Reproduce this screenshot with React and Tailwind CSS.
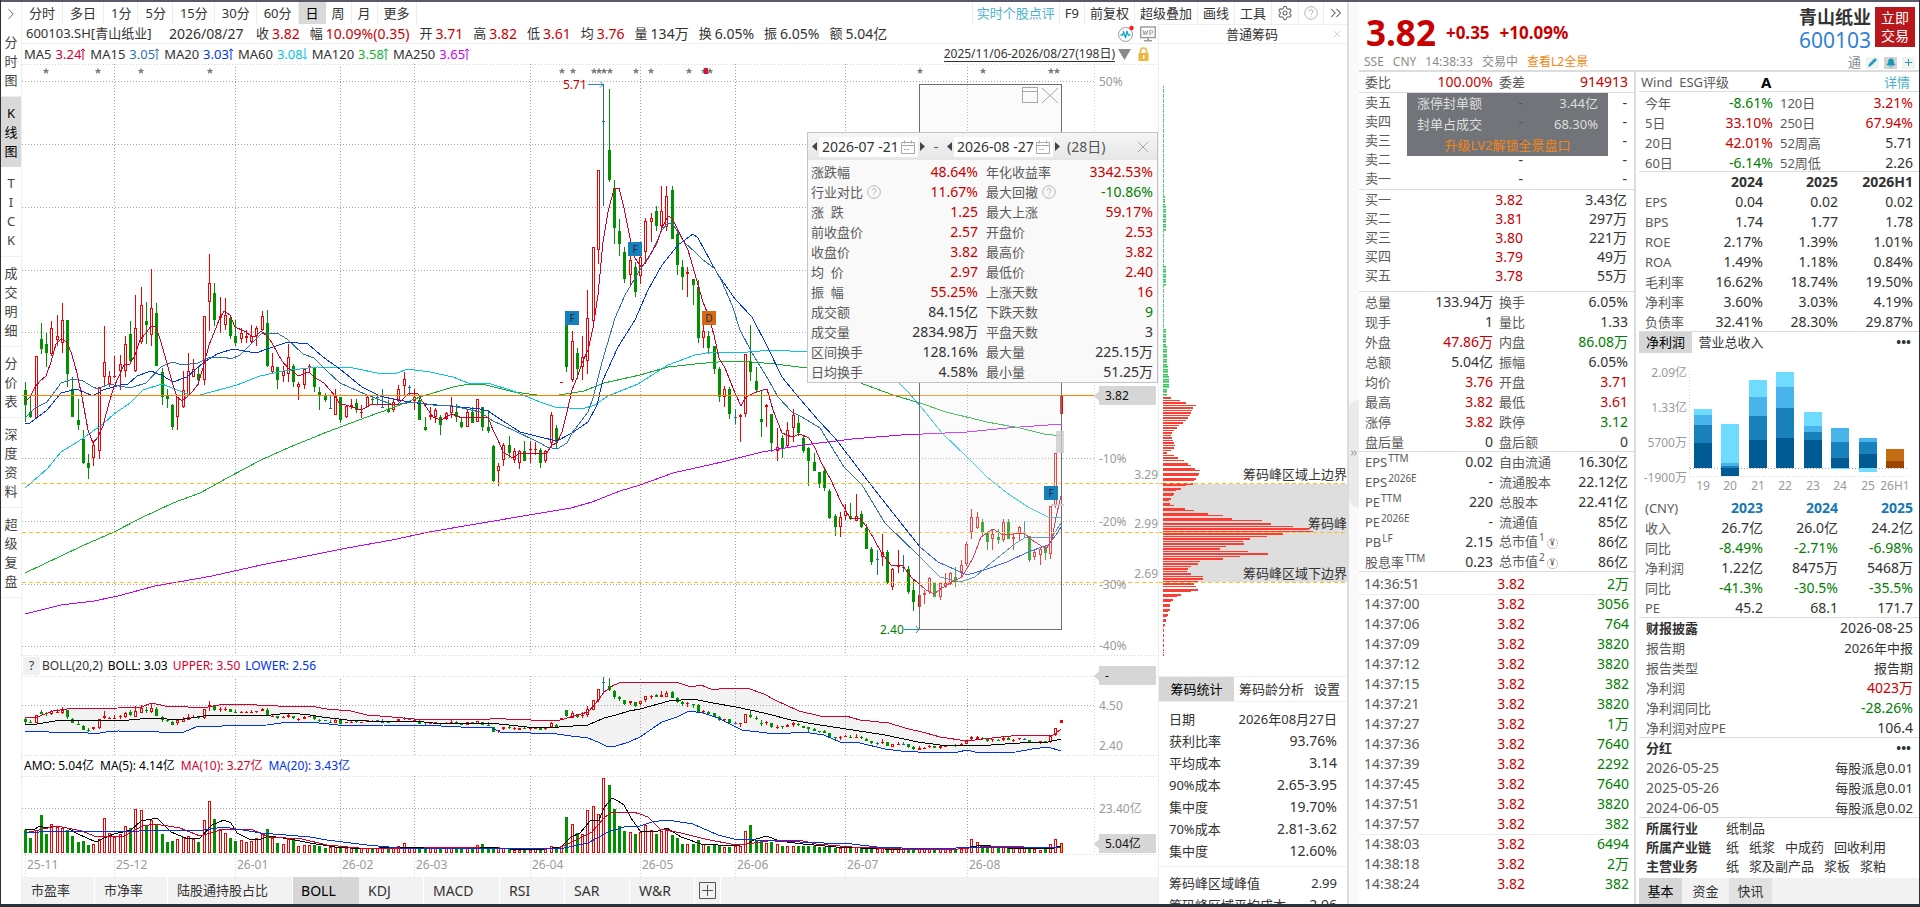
import React from "react";
import { ChevronRight, ChevronsRight, Settings, X, Pencil, Bell, Plus } from "lucide-react";

/* ------------------------------------------------------------------ data */

const FIRST_X = 25;
const STEP = 5.257;
const cx = (i) => Math.round(FIRST_X + i * STEP);

// direction, high, body top, body bottom, low (chart y coordinates)
const CANDLES = `g382,390,405,422 g395,412,417,418 r356,356,418,418 g323,339,349,354 g333,344,353,367 r321,328,354,356
r315,336,340,346 r303,320,343,353 g320,320,374,387 g377,389,417,417 g399,420,425,430 g430,439,463,464
g454,463,468,479 r441,445,458,466 r387,387,451,459 r326,362,377,387 r371,376,384,387 r356,376,377,378
r355,364,371,390 r336,344,371,377 g321,334,361,364 r295,328,371,372 r287,305,342,344 g302,321,325,344
r269,308,335,346 g303,313,366,366 g368,372,397,405 g389,395,399,408 g404,405,427,430 r397,397,417,430
r371,390,407,408 r353,371,395,396 r359,369,377,377 g366,374,380,385 r316,316,380,385 r254,283,302,331
g283,293,320,326 r297,316,318,333 r298,315,325,330 g315,318,336,339 g320,336,343,346 r328,333,339,343
r330,336,338,343 r325,336,342,343 r326,328,336,346 r311,316,330,331 g310,323,366,367 r353,366,372,374
g367,367,380,389 r366,371,376,382 r344,357,374,382 g364,366,382,387 r382,384,387,400 r368,369,385,389
r364,366,368,373 g367,368,387,392 g387,392,396,410 g393,396,400,402 b396,408,408,409 r389,395,415,415
g397,397,420,423 r405,406,417,418 r399,405,407,409 g399,403,410,413 r405,412,413,418 r396,397,407,407
g395,399,400,405 b395,397,397,404 b389,407,407,408 g400,409,412,413 r398,402,410,412 r385,389,400,402
r372,379,386,395 b385,387,387,396 r389,397,401,410 g396,400,420,420 g417,427,430,431 r407,415,417,420
r408,410,417,423 g415,417,425,435 r412,413,419,420 r397,406,413,418 g404,412,417,422 g418,422,427,428
r410,412,427,427 g407,412,423,423 r399,399,422,422 g407,407,427,431 g410,427,431,433 g445,446,481,482
r463,466,471,486 r443,445,460,466 g436,445,453,458 r448,451,460,463 r450,451,463,469 g441,451,461,461
r441,449,450,463 r442,449,450,455 g448,450,463,468 r450,451,461,463 r412,415,443,445 g425,428,442,448
r382,382,383,383 g324,324,367,372 r331,341,380,382 g348,353,369,379 r336,357,367,380 r290,318,361,374
r247,247,321,323 r170,170,250,264 b84,121,121,206 g89,150,180,182 g180,188,228,244 g219,231,244,256
g247,252,279,283 r255,260,275,285 g262,267,292,297 r256,257,276,284 r218,221,252,264 r213,218,222,242
g206,211,226,231 r186,211,226,229 r186,196,227,231 g186,190,239,239 g229,234,265,275 g260,267,277,290
r267,272,274,297 g279,279,285,305 g280,287,338,343 r323,331,338,348 g331,336,348,354 g346,346,369,374
g367,369,397,402 r386,389,397,407 g387,389,414,419 b409,417,417,424 r414,415,417,442 r354,354,414,417
g325,361,372,381 g367,381,390,393 g391,419,422,437 r404,405,407,427 g414,414,443,452 r428,447,451,461
g435,438,448,458 r422,430,446,447 r409,415,428,442 g415,423,433,436 g435,438,451,453 g447,448,461,486
g453,462,471,471 g472,472,484,488 g468,471,488,491 g489,491,518,519 g514,516,527,536 r512,517,527,537
r504,511,516,520 g503,516,519,520 r494,516,521,521 g511,514,527,528 g524,528,549,549 g547,549,562,565
b550,559,559,575 r534,552,557,566 g550,552,583,584 r568,569,587,590 r550,566,567,573 b555,567,567,572
g566,569,592,594 g580,590,602,611 r583,595,607,608 r590,593,595,604 r577,578,592,594 g582,583,597,597
r582,583,597,600 r573,583,587,588 r572,573,584,585 g567,577,583,587 r560,565,572,577 r542,544,564,566
r509,517,532,539 r512,517,528,529 g519,522,533,536 g532,533,542,550 r530,534,539,550 g529,537,540,544
r519,522,540,542 g519,522,539,539 r534,537,539,550 r526,527,533,540 b521,532,532,537 g536,536,560,562
r550,552,557,560 r548,549,555,565 g545,549,553,560 r506,506,554,559 r453,453,505,508 R396,396,414,414`
  .split(/\s+/)
  .map((s) => [s[0], ...s.slice(1).split(",").map(Number)]);

const TURNOVER = [
  23, 15, 23, 38, 19, 29, 26, 25, 23, 17, 11, 12, 8, 9, 14, 35, 20, 16, 19, 27, 25, 44, 43, 28, 33, 28, 19, 11, 12, 14,
  16, 17, 14, 11, 33, 52, 34, 24, 20, 15, 12, 13, 11, 12, 15, 19, 24, 15, 10, 9, 14, 14, 7, 8, 8, 8, 7, 5, 6, 6, 6, 5,
  5, 5, 5, 5, 5, 5, 5, 4, 5, 7, 10, 6, 5, 6, 5, 5, 5, 5, 5, 6, 5, 5, 5, 5, 8, 9, 5, 6, 6, 5, 5, 3, 3, 3, 3, 4, 4, 4, 7,
  5, 7, 36, 29, 20, 19, 43, 47, 39, 75, 68, 44, 27, 22, 21, 19, 21, 28, 23, 19, 22, 24, 18, 15, 9, 9, 9, 13, 9, 7, 8,
  7, 6, 6, 7, 7, 22, 28, 13, 12, 10, 11, 9, 7, 7, 7, 7, 7, 7, 7, 6, 6, 6, 5, 5, 6, 5, 6, 5, 5, 5, 4, 5, 5, 4, 4, 4, 4,
  4, 5, 4, 5, 4, 4, 4, 3, 3, 4, 5, 14, 11, 8, 7, 6, 5, 6, 6, 5, 6, 5, 6, 4, 3, 4, 9, 14, 10,
];

const MA = {
  ma5: "25,402 30,397 35,387 40,381 46,376 51,362 56,344 61,339 67,342 72,355 77,373 82,397 88,430 93,443 98,437 103,426 109,403 114,387 124,365 130,364 135,355 140,340 146,333 151,326 156,327 161,342 167,363 172,382 177,397 182,401 188,396 193,391 198,384 203,368 209,345 214,333 219,320 224,311 230,315 235,327 246,332 251,336 256,336 261,331 267,336 272,343 277,352 282,361 288,368 293,371 298,376 309,372 314,377 324,383 330,390 335,396 340,404 346,405 361,410 372,404 398,404 403,399 409,393 418,394 424,404 433,417 441,420 452,414 462,418 472,417 488,417 493,430 498,440 503,452 513,458 520,453 540,453 546,454 552,445 557,443 562,432 567,412 572,390 577,378 582,363 588,350 593,328 598,295 603,242 608,212 614,189 619,188 624,208 630,238 635,258 641,267 646,262 657,243 662,228 668,216 672,218 678,230 688,250 693,267 698,285 703,302 709,317 714,335 719,358 725,368 735,393 741,406 746,397 756,392 767,389 773,410 782,433 792,437 800,434 809,438 815,448 821,462 831,480 840,500 850,518 860,518 869,530 881,552 891,565 903,566 911,577 926,590 934,594 942,588 952,582 962,577 973,558 981,537 993,529 1003,535 1024,533 1032,540 1046,549 1052,540 1056,517 1061,496",
  ma15: "25,418 35,408 47,402 61,383 73,379 83,381 93,387 98,389 109,384 130,388 146,383 161,367 172,362 183,365 198,363 210,357 224,357 231,359 240,355 251,344 261,334 277,333 287,339 303,354 314,358 327,371 340,383 367,395 383,401 393,405 414,402 433,405 453,406 480,412 493,421 513,430 540,443 547,447 557,449 567,443 572,433 588,412 593,398 602,362 615,318 625,295 640,270 652,252 662,230 668,223 672,223 685,243 695,252 702,259 715,269 722,282 732,305 740,330 752,353 768,379 778,397 792,412 802,417 820,428 844,467 862,485 885,523 920,557 940,577 960,582 975,577 991,563 1016,543 1026,537 1052,537 1061,523",
  ma20: "25,424 30,423 47,410 61,393 77,389 93,396 103,390 120,385 128,384 137,376 151,371 163,376 173,382 187,377 203,363 217,354 233,349 256,353 267,349 288,342 308,344 323,357 340,369 362,387 380,396 397,400 424,404 450,406 480,409 488,411 503,421 520,432 540,437 557,441 572,433 588,422 597,405 603,380 618,347 635,320 648,290 662,265 678,245 693,234 698,238 717,273 735,299 752,317 768,348 782,377 795,393 818,420 835,438 848,455 871,485 893,513 920,547 938,562 967,575 987,569 1007,562 1028,552 1048,545 1056,535 1061,527",
  ma60: "25,488 47,469 61,452 82,439 103,424 114,414 130,403 143,390 162,384 190,395 200,395 237,385 260,376 283,371 317,367 353,368 382,374 397,373 408,369 430,372 453,377 468,383 488,383 513,391 540,402 555,407 582,409 595,405 608,396 638,384 668,365 695,355 712,352 748,352 772,350 807,352 850,358 898,382 909,393 926,413 942,433 967,457 987,477 1007,493 1028,507 1048,517 1061,518",
  ma120: "25,573 82,546 114,532 141,518 173,503 200,493 229,477 261,460 290,447 327,432 367,417 392,408 420,397 453,387 469,384 486,385 514,392 537,395 559,395 584,391 604,383 640,375 668,367 695,364 718,362 735,361 752,362 775,364 807,368 858,382 893,395 920,403 946,412 987,422 1020,428 1044,434 1061,436",
  ma250: "25,614 61,605 94,601 118,596 155,586 178,582 212,576 261,565 302,557 347,548 392,540 429,532 482,523 535,514 571,508 592,502 620,491 640,485 673,473 722,462 762,452 803,445 852,439 901,435 967,432 1007,428 1048,425 1061,424",
};

const BOLL = {
  upper: "25,718 37,717 53,711 67,709 118,708 131,707 141,707 152,703 165,706 188,707 198,708 208,707 224,704 243,704 257,705 278,706 310,706 327,709 351,711 367,715 392,717 414,719 490,719 498,718 506,719 531,720 557,721 567,718 588,712 596,703 604,692 614,685 622,682 656,682 679,683 691,687 701,685 713,690 726,688 747,688 764,694 775,700 799,711 820,716 846,716 860,720 889,723 905,728 926,733 940,737 967,741 983,739 1020,735 1052,736 1061,729",
  mid: "25,725 37,724 61,720 73,720 84,721 106,720 129,720 151,718 167,719 184,719 204,716 224,715 245,715 261,716 290,713 310,715 322,717 347,720 367,721 414,721 433,723 490,723 527,727 559,727 588,725 604,718 616,715 629,711 640,709 669,701 693,699 713,703 736,707 764,713 791,720 820,725 846,729 885,735 918,742 940,745 967,746 991,745 1020,743 1048,742 1061,739",
  lower: "25,732 41,731 49,732 82,732 94,734 106,732 118,731 159,732 184,732 196,727 222,726 267,725 288,722 310,722 347,726 384,725 420,725 461,727 490,727 500,732 531,733 557,734 571,736 588,738 600,743 608,747 616,746 629,742 640,737 662,722 677,717 689,711 703,713 718,718 742,730 767,733 791,733 803,732 824,735 840,742 860,743 885,749 901,751 934,753 958,752 967,750 979,753 1016,752 1032,749 1048,747 1061,751",
};

const AMO = {
  ma5: "25,829 35,829 40,826 46,828 57,826 67,828 78,834 96,842 104,838 114,834 131,830 141,821 157,818 171,832 188,839 200,838 212,825 224,820 231,823 237,833 251,840 261,839 269,836 290,839 310,843 335,847 367,849 392,847 437,847 461,849 486,847 510,849 535,850 561,847 571,837 580,833 590,821 599,820 604,808 612,798 618,801 624,805 631,818 640,831 658,831 667,828 681,837 701,844 734,846 747,844 756,839 767,836 779,841 803,844 836,847 885,849 958,849 983,845 1007,848 1044,849 1054,848 1061,846",
  ma10: "25,833 57,826 82,831 94,836 122,837 143,826 155,824 180,828 200,836 224,829 253,830 269,837 302,839 327,845 359,848 400,849 449,847 510,849 559,848 576,840 592,832 604,818 612,812 633,812 640,814 648,817 660,829 681,833 705,839 736,845 747,844 775,840 799,840 816,844 852,847 901,849 958,849 991,846 1024,847 1061,847",
  ma20: "25,833 53,831 102,831 127,832 151,830 204,830 224,827 261,833 310,837 327,840 367,845 400,848 449,848 559,849 588,843 608,832 624,827 640,826 652,822 667,820 693,824 718,835 734,839 775,841 824,843 852,844 877,847 926,849 987,847 1061,847",
};

const CHIPS = [
  8, 17, 23, 33, 30, 29, 28, 27, 25, 23, 20, 16, 14, 11, 9, 8, 9, 10, 11, 12, 11, 8, 4, 11, 15, 21, 25, 28, 32, 37, 36,
  35, 33, 31, 30, 23, 18, 13, 11, 10, 8, 6, 7, 11, 22, 31, 45, 60, 69, 99, 108, 130, 146, 150, 120, 104, 87, 80, 81, 63,
  57, 85, 105, 77, 60, 37, 35, 28, 25, 24, 28, 40, 40, 35, 31, 33, 35, 28, 18, 14, 10, 8, 7, 7, 7, 5, 5, 4, 3, 3, 2, 1,
  1, 1, 1, 1, 1, 1, 1, 1, 1, 1, 1,
];

const chipAbove = (y) => {
  if (y < 196) return 1;
  if (y < 206) return 2;
  if (y < 230) return 3;
  if (y < 266) return 1;
  if (y < 286) return 3;
  if (y < 328) return 1;
  if (y < 345) return 3;
  if (y < 365) return 4;
  if (y < 376) return 5;
  if (y < 388) return 6;
  return 4;
};

const MONTHS = [
  [25, "25-11"], [114, "25-12"], [235, "26-01"], [340, "26-02"], [414, "26-03"],
  [530, "26-04"], [640, "26-05"], [735, "26-06"], [845, "26-07"], [967, "26-08"],
];

const R = "text-[#c80000]";
const G = "text-[#008000]";
const K = "text-[#333333]";
const UP = "#f00000";
const DOWN = "#009000";
const FLAT = "#1c6f9c";

/* --------------------------------------------------------------- drawing */

function Grid({ top, bottom, rows }) {
  return (
    <g shapeRendering="crispEdges">
      {MONTHS.slice(1).map(([x]) => (
        <line key={x} x1={x + 0.5} x2={x + 0.5} y1={top} y2={bottom} stroke="#a4a4a4" strokeDasharray="1 2" />
      ))}
      {rows.map((y) => (
        <line key={y} x1={22} x2={1094} y1={y + 0.5} y2={y + 0.5} stroke="#a4a4a4" strokeDasharray="1 2" />
      ))}
      <line x1={1094.5} x2={1094.5} y1={top} y2={bottom} stroke="#d4d4d4" strokeDasharray="1 2" />
      <line x1={22} x2={1158} y1={top + 0.5} y2={top + 0.5} stroke="#d4d4d4" strokeDasharray="1 2" />
    </g>
  );
}

function Candle({ x, c }) {
  const [d, hi, t, b, lo] = c;
  const h = Math.max(b - t, 1);
  if (d === "b")
    return (
      <g fill={FLAT}>
        <rect x={x} y={hi} width={1} height={lo - hi} />
        <rect x={x - 1} y={t} width={3} height={1} />
      </g>
    );
  if (d === "g")
    return (
      <g fill={DOWN}>
        <rect x={x} y={hi} width={1} height={Math.max(lo - hi, 1)} />
        <rect x={x - 1} y={t} width={3} height={h} />
      </g>
    );
  if (d === "R") return <rect x={x - 1} y={t} width={3} height={h} fill={UP} />;
  return (
    <g fill={UP}>
      <rect x={x} y={hi} width={1} height={Math.max(t - hi, 0)} />
      <rect x={x} y={b} width={1} height={Math.max(lo - b, 0)} />
      <rect x={x - 1} y={t} width={3} height={h} />
      {h > 2 && <rect x={x} y={t + 1} width={1} height={h - 2} fill="#ffffff" />}
    </g>
  );
}

const Line = ({ points, color }) => (
  <polyline points={points} fill="none" stroke={color} strokeWidth={1} shapeRendering="crispEdges" />
);

function Tag({ y, text }) {
  return (
    <g>
      <path d={`M1094 ${y + 10} l5 -5 v10 z M1099 ${y} h57 v19 h-57 z`} fill="#d6d6d6" />
      <text x={1105} y={y + 14} fontSize={12} fill="#111111">{text}</text>
    </g>
  );
}

function Flag({ x, y, text, color }) {
  return (
    <g>
      <rect x={x} y={y} width={14} height={14} fill={color} />
      <text x={x + 7} y={y + 11} fontSize={10} textAnchor="middle" fill="#22303c">{text}</text>
    </g>
  );
}

const Star = ({ x, color = "#7c7c7c" }) => (
  <path
    transform={`translate(${x} 71)`}
    d="M0 -3.4 L0.9 -1 L3.4 -1 L1.4 0.5 L2.2 3 L0 1.5 L-2.2 3 L-1.4 0.5 L-3.4 -1 L-0.9 -1 Z"
    fill={color}
  />
);

const svgClass = "block w-full shrink-0 overflow-visible";

function MainChart() {
  return (
    <svg className={`${svgClass} h-[591px]`} viewBox="22 64 1136 591" preserveAspectRatio="none" role="img" aria-label="K线图">
      <Grid top={64} bottom={655} rows={[81, 144, 207, 270, 332, 458, 521, 584, 646]} />
      <line x1={22} x2={1158} y1={655.5} y2={655.5} stroke="#d4d4d4" strokeDasharray="1 2" />
      {[46, 98, 141, 210, 562, 573, 594, 599, 604, 610, 636, 651, 689, 704, 710, 920, 983, 1051, 1057].map((x) => (
        <Star key={x} x={x} />
      ))}
      <rect x={704} y={68} width={4} height={6} fill="#d4143c" />
      <g shapeRendering="crispEdges">
        {CANDLES.map((c, i) => <Candle key={i} x={cx(i)} c={c} />)}
      </g>
      <Line points={MA.ma250} color="#c800ff" />
      <Line points={MA.ma120} color="#14b02e" />
      <Line points={MA.ma60} color="#08c4dc" />
      <Line points={MA.ma20} color="#0034e8" />
      <Line points={MA.ma15} color="#2e72ac" />
      <Line points={MA.ma5} color="#d0002c" />
      <g shapeRendering="crispEdges">
        <rect x={22} y={395} width={1072} height={1} fill="#ff8000" />
        {[483, 532, 582].map((y) => (
          <line key={y} x1={22} x2={1158} y1={y + 0.5} y2={y + 0.5} stroke="#ffbe1a" strokeDasharray="4 3" />
        ))}
        <rect x={919.5} y={84.5} width={142} height={545} fill="#f0f0f0" fillOpacity={0.28} stroke="#6e6e6e" />
        <rect x={1056} y={431} width={8} height={22} fill="#cccccc" fillOpacity={0.8} />
        <rect x={1051} y={504} width={13} height={2} fill="#cccccc" fillOpacity={0.9} />
      </g>
      <g fill="none" stroke="#a8a8a8">
        <rect x={1022.5} y={87.5} width={15} height={15} />
        <path d="M1022 91.5 h16" />
        <path d="M1042 88 l16 15 M1058 88 l-16 15" />
      </g>
      <Flag x={565} y={311} text="F" color="#1680bc" />
      <Flag x={628} y={242} text="F" color="#1680bc" />
      <Flag x={702} y={311} text="D" color="#d46a14" />
      <Flag x={1044} y={486} text="F" color="#1680bc" />
      <g fill="none" stroke="#2c8cae">
        <path d="M588 84.5 h15 M600 81.5 l3 3 l-3 3" />
        <path d="M904 629.5 h15 M916 626 l3 3.5 l-3 3.5" />
      </g>
      <text x={563} y={89} fontSize={12} fill="#c80000">5.71</text>
      <text x={880} y={634} fontSize={12} fill="#008000">2.40</text>
      <g fontSize={12} fill="#9a9a9a">
        <text x={1099} y={86}>50%</text>
        <text x={1099} y={463}>-10%</text>
        <text x={1099} y={526}>-20%</text>
        <text x={1099} y={589}>-30%</text>
        <text x={1099} y={650}>-40%</text>
        <text x={1158} y={479} textAnchor="end">3.29</text>
        <text x={1158} y={528} textAnchor="end">2.99</text>
        <text x={1158} y={578} textAnchor="end">2.69</text>
      </g>
      <Tag y={386} text="3.82" />
    </svg>
  );
}

const toBoll = (y) => Math.round(677 + (y - 84) * 0.1387);

function BollChart() {
  const back = BOLL.lower.split(" ").reverse().join(" ");
  return (
    <svg className={`${svgClass} h-[79px]`} viewBox="22 676 1136 79" preserveAspectRatio="none" role="img" aria-label="BOLL">
      <polygon points={`${BOLL.upper} ${back}`} fill="#f3f3f3" />
      <Grid top={676} bottom={755} rows={[705]} />
      <line x1={22} x2={1158} y1={755.5} y2={755.5} stroke="#d4d4d4" strokeDasharray="1 2" />
      <g shapeRendering="crispEdges">
        {CANDLES.map(([d, ...v], i) => <Candle key={i} x={cx(i)} c={[d, ...v.map(toBoll)]} />)}
      </g>
      <Line points={BOLL.upper} color="#d4002c" />
      <Line points={BOLL.mid} color="#000000" />
      <Line points={BOLL.lower} color="#0030f0" />
      <text x={1099} y={710} fontSize={12} fill="#9a9a9a">4.50</text>
      <text x={1099} y={750} fontSize={12} fill="#9a9a9a">2.40</text>
      <Tag y={666} text="-" />
    </svg>
  );
}

function AmoChart() {
  return (
    <svg className={`${svgClass} h-[101px]`} viewBox="22 776 1136 101" preserveAspectRatio="none" role="img" aria-label="成交额">
      <Grid top={776} bottom={853} rows={[808]} />
      <g shapeRendering="crispEdges">
        <line x1={22} x2={1158} y1={854.5} y2={854.5} stroke="#d4d4d4" strokeDasharray="1 2" />
        {CANDLES.map(([d], i) => {
          const h = TURNOVER[i] ?? 5;
          const x = cx(i);
          const y = 853 - h;
          if (d === "g") return <rect key={i} x={x - 1} y={y} width={3} height={h} fill={DOWN} />;
          return (
            <g key={i}>
              <rect x={x - 1} y={y} width={3} height={h} fill={UP} />
              <rect x={x} y={y + 1} width={1} height={Math.max(h - 2, 1)} fill={d === "R" ? "#ffbe1a" : "#ffffff"} />
            </g>
          );
        })}
        {MONTHS.map(([x]) => (
          <line key={x} x1={x + 0.5} x2={x + 0.5} y1={855} y2={877} stroke="#d4d4d4" strokeDasharray="1 2" />
        ))}
      </g>
      <Line points={AMO.ma5} color="#000000" />
      <Line points={AMO.ma10} color="#d4002c" />
      <Line points={AMO.ma20} color="#0030f0" />
      <text x={1099} y={813} fontSize={12} fill="#9a9a9a">23.40亿</text>
      <Tag y={834} text="5.04亿" />
      <g fontSize={12} fill="#9a9a9a">
        {MONTHS.map(([x, label]) => <text key={x} x={x + 2} y={869}>{label}</text>)}
      </g>
    </svg>
  );
}

function ChipChart() {
  const above = [];
  for (let y = 86; y < 396; y += 2.5) above.push(y);
  return (
    <svg className="block h-[632px] w-full shrink-0" viewBox="1159 44 188 632" preserveAspectRatio="none" role="img" aria-label="普通筹码">
      <rect x={1163} y={484} width={184} height={98} fill="#dedede" />
      {above.map((y) => <rect key={y} x={1163} y={Math.round(y)} width={chipAbove(y)} height={1.6} fill="#34c85a" />)}
      <g shapeRendering="crispEdges">
        {CHIPS.map((w, i) => {
          const y = Math.round(397 + i * 2.52);
          return <rect key={i} x={1163} y={y} width={w} height={i % 2 ? 1 : 2} fill="#ff3c32" />;
        })}
        {[483, 532, 582].map((y) => (
          <line key={y} x1={1159} x2={1347} y1={y + 0.5} y2={y + 0.5} stroke="#ffbe1a" strokeDasharray="4 3" />
        ))}
      </g>
      <g fontSize={13} fill="#333333" textAnchor="end">
        <text x={1347} y={479}>筹码峰区域上边界</text>
        <text x={1347} y={528}>筹码峰</text>
        <text x={1347} y={578}>筹码峰区域下边界</text>
      </g>
    </svg>
  );
}

const PROFIT = [
  ["19", [[409, 6, 3], [415, 10, 2], [425, 18, 1], [443, 25, 0]]],
  ["20", [[424, 39, 3], [463, 3, 2], [466, 2, 1], [468, 8, 0]]],
  ["21", [[380, 17, 3], [397, 19, 2], [416, 24, 1], [440, 28, 0]]],
  ["22", [[372, 15, 3], [387, 21, 2], [408, 30, 1], [438, 30, 0]]],
  ["23", [[412, 14, 3], [426, 6, 2], [432, 8, 1], [440, 28, 0]]],
  ["24", [[428, 14, 2], [442, 16, 1], [458, 10, 0], [468, 1, 3]]],
  ["25", [[438, 4, 2], [442, 12, 1], [454, 14, 0], [468, 4, 3]]],
  ["26H1", [[449, 12, 4], [461, 7, 5]]],
];
const SHADES = ["#005a94", "#1880ba", "#49b3ec", "#6fdcff", "#c46c12", "#9c4400"];

function ProfitChart() {
  const xs = [1694, 1721, 1749, 1776, 1804, 1831, 1859, 1886];
  return (
    <svg className="block h-[145px] w-full shrink-0" viewBox="1639 353 280 145" preserveAspectRatio="none" role="img" aria-label="净利润">
      <g shapeRendering="crispEdges">
        <line x1={1689.5} x2={1689.5} y1={371} y2={476} stroke="#d4d4d4" strokeDasharray="1 2" />
        <line x1={1690} x2={1909} y1={476.5} y2={476.5} stroke="#d4d4d4" strokeDasharray="1 2" />
        <line x1={1690} x2={1909} y1={468.5} y2={468.5} stroke="#a0a0a0" strokeDasharray="1 2" />
        {PROFIT.map(([, parts], i) =>
          parts.map(([y, h, s]) => <rect key={`${i}-${y}`} x={xs[i]} y={y} width={18} height={h} fill={SHADES[s]} />)
        )}
      </g>
      <g fontSize={12} fill="#9a9a9a" textAnchor="end">
        <text x={1687} y={377}>2.09亿</text>
        <text x={1687} y={412}>1.33亿</text>
        <text x={1687} y={447}>5700万</text>
        <text x={1687} y={482}>-1900万</text>
      </g>
      <g fontSize={12} fill="#9a9a9a" textAnchor="middle">
        {PROFIT.map(([label], i) => <text key={label} x={xs[i] + 9} y={490}>{label}</text>)}
      </g>
    </svg>
  );
}

/* ------------------------------------------------------------- left side */

const SIDE = ["分时图", "K线图", "TICK", "成交明细", "分价表", "深度资料", "超级复盘"];

function Sidebar() {
  return (
    <nav className="flex w-[21px] shrink-0 flex-col border-r border-[#efefef] text-[13px] text-[#444444]">
      <button className="flex h-[24px] shrink-0 items-center justify-center" aria-label="展开">
        <ChevronRight size={18} strokeWidth={1.3} className="text-[#666666]" />
      </button>
      {SIDE.map((s) => (
        <button
          key={s}
          className={
            s === "K线图"
              ? "flex shrink-0 flex-col items-center bg-[#d9d9d9] pt-[7px] pb-[6px] leading-[19px] text-black"
              : "flex shrink-0 flex-col items-center border-b border-[#efefef] pt-[7px] pb-[6px] leading-[19px]"
          }
        >
          {[...s].map((c, i) => <span key={i} className="h-[19px]">{c}</span>)}
        </button>
      ))}
    </nav>
  );
}

const PERIODS = ["分时", "多日", "1分", "5分", "15分", "30分", "60分", "日", "周", "月", "更多"];

function Toolbar() {
  const cell = "flex items-center border-r border-[#ededed]";
  return (
    <div className="flex h-[22px] shrink-0 items-stretch text-[13px] leading-none text-[#333333]">
      {PERIODS.map((p, i) => (
        <button
          key={p}
          className={p === "日" ? "flex items-center bg-[#d9d9d9] px-[7px] text-black" : `${cell} ${i > 7 ? "px-[6px]" : i > 1 ? "pr-[6px] pl-[7px]" : "px-[7px]"}`}
        >
          {p}
        </button>
      ))}
      <div className="flex-1 border-r border-[#ededed]" />
      <button className={`${cell} px-1 text-[#4ab0cc]`}>实时个股点评</button>
      {["F9", "前复权", "超级叠加", "画线", "工具"].map((p) => (
        <button key={p} className={`${cell} px-[5px]`}>{p}</button>
      ))}
      <button className={`${cell} w-[27px] justify-center text-[#666666]`} aria-label="设置">
        <Settings size={16} strokeWidth={1.6} />
      </button>
      <button className={`${cell} w-[25px] justify-center`} aria-label="帮助">
        <HelpMark />
      </button>
      <button className="flex w-[23px] items-center justify-center text-[#555555]" aria-label="更多工具">
        <ChevronsRight size={18} strokeWidth={1.4} />
      </button>
    </div>
  );
}

function HelpMark() {
  return (
    <svg width="14" height="14" viewBox="0 0 14 14" fill="none" stroke="#b4b4b4">
      <circle cx="7" cy="7" r="6.3" />
      <path d="M5 5.5 a2 2 0 1 1 2.9 1.8 q-0.9 0.5 -0.9 1.4 M7 9.8 v1" />
    </svg>
  );
}

const INFO = [
  ["收", "3.82", R], ["幅", "10.09%(0.35)", R], ["开", "3.71", R], ["高", "3.82", R], ["低", "3.61", R],
  ["均", "3.76", R], ["量", "134万", K], ["换", "6.05%", K], ["振", "6.05%", K], ["额", "5.04亿", K],
];

const MA_ROW = [
  ["MA5", "3.24", "u", "text-[#d0002c]"], ["MA15", "3.05", "u", "text-[#2e72ac]"], ["MA20", "3.03", "u", "text-[#0034e8]"],
  ["MA60", "3.08", "d", "text-[#08c4dc]"], ["MA120", "3.58", "u", "text-[#14b02e]"], ["MA250", "3.65", "u", "text-[#c800ff]"],
];

function InfoRows() {
  return (
    <>
      <div className="flex h-[20px] shrink-0 items-center border-b border-[#efefef] pl-1 text-[13px] leading-none text-[#333333]">
        <span className="w-[143px]">600103.SH[青山纸业]</span>
        <span className="mr-[10px] w-[77px] text-[14px]">2026/08/27</span>
        {INFO.map(([l, v, c]) => (
          <span key={l} className="mr-[10px] flex items-center gap-[3px]">
            {l}
            <span className={`text-[14px] ${c}`}>{v}</span>
          </span>
        ))}
        <span className="ml-auto flex items-center gap-[6px] pr-[2px]">
          <svg width="16" height="18" viewBox="0 0 16 18" fill="none">
            <circle cx="7.5" cy="9.5" r="7" stroke="#9a9a9a" />
            <path d="M2.5 10 h2 l1.2 -3 l1.8 6 l1.5 -7 l1.2 4 h2.3" stroke="#12a8c8" strokeWidth="1.3" />
            <circle cx="13.5" cy="3" r="2.2" fill="#ff1a1a" />
          </svg>
          <svg width="16" height="16" viewBox="0 0 16 16" fill="none" stroke="#9a9a9a">
            <rect x="0.7" y="1" width="14.6" height="10.6" strokeWidth="1.4" />
            <path d="M8 12 v2 M4 14.8 h8" strokeWidth="1.6" />
            <path d="M3 4 l1.2 5 l1.2 -4 l1.2 4 l1.2 -5 M9.8 9.4 v-5 h1.7 q1.4 0 1.4 1.4 t-1.4 1.4 h-1.7" />
          </svg>
        </span>
      </div>
      <div className="flex h-[20px] shrink-0 items-center gap-[5px] pl-[2px] text-[13px] leading-none text-[#333333]">
        {MA_ROW.map(([l, v, d, c]) => (
          <span key={l} className="flex items-center gap-1">
            {l}
            <span className={`flex items-center ${c}`}>
              {v}
              <svg width="4" height="12" viewBox="0 0 4 12" fill="none" stroke="currentColor">
                <path d={d === "u" ? "M2 12 V1 M0 3 L2 0.8 L4 3" : "M2 0 V11 M0 9 L2 11.2 L4 9"} />
              </svg>
            </span>
          </span>
        ))}
        <span className="ml-auto flex items-center gap-[3px] pr-[9px]">
          <button className="border-b border-[#333333] text-[12px] leading-[15px]">2025/11/06-2026/08/27(198日)</button>
          <svg width="13" height="11" viewBox="0 0 13 11"><path d="M0 0 h13 l-6.5 11 z" fill="#8a8a8a" /></svg>
          <svg className="ml-1" width="11" height="14" viewBox="0 0 11 14">
            <path d="M2.5 6 V4 a3 3 0 0 1 6 0 V6" fill="none" stroke="#f2b53c" strokeWidth="1.6" />
            <rect x="0.5" y="6" width="10" height="8" fill="#f2b53c" />
            <rect x="5" y="8" width="1.4" height="4" fill="#ffffff" />
          </svg>
        </span>
      </div>
    </>
  );
}

/* ------------------------------------------------------- interval window */

const INTERVAL = [
  ["涨跌幅", "48.64%", R, "年化收益率", "3342.53%", R],
  ["行业对比", "11.67%", R, "最大回撤", "-10.86%", G],
  ["涨  跌", "1.25", R, "最大上涨", "59.17%", R],
  ["前收盘价", "2.57", R, "开盘价", "2.53", R],
  ["收盘价", "3.82", R, "最高价", "3.82", R],
  ["均  价", "2.97", R, "最低价", "2.40", R],
  ["振  幅", "55.25%", R, "上涨天数", "16", R],
  ["成交额", "84.15亿", K, "下跌天数", "9", G],
  ["成交量", "2834.98万", K, "平盘天数", "3", K],
  ["区间换手", "128.16%", K, "最大量", "225.15万", K],
  ["日均换手", "4.58%", K, "最小量", "51.25万", K],
];

function DateField({ value, label }) {
  return (
    <span className="flex items-center gap-[2px]">
      <button aria-label={`${label}前一日`}><svg width="5" height="9" viewBox="0 0 5 9"><path d="M5 0 v9 l-5 -4.5 z" fill="#444444" /></svg></button>
      <span className="flex h-[20px] items-center bg-white px-[3px]">
        <input aria-label={label} defaultValue={value} className="w-[79px] bg-transparent text-[14px] leading-none text-[#333333] outline-none" />
        <svg width="14" height="14" viewBox="0 0 14 14" fill="none" stroke="#a8a8a8">
          <path d="M0.5 2.5 h13 v11 h-13 z M0.5 5.5 h13 M3.5 0.5 v3 M10.5 0.5 v3" />
          <path d="M3 9.5 h2 M6 9.5 h2" />
        </svg>
      </span>
      <button aria-label={`${label}后一日`}><svg width="5" height="9" viewBox="0 0 5 9"><path d="M0 0 v9 l5 -4.5 z" fill="#444444" /></svg></button>
    </span>
  );
}

function IntervalWindow() {
  return (
    <section className="absolute top-[68px] right-0 w-[351px] border border-[#c4c4c4] bg-[#f9f9f9]">
      <header className="flex h-[27px] items-center bg-linear-to-b from-[#f6f6f6] to-[#e6e6e6] pr-1 pl-1 text-[14px] leading-none text-[#555555]">
        <DateField value="2026-07 -21" label="开始日期" />
        <span className="w-[22px] text-center">-</span>
        <DateField value="2026-08 -27" label="结束日期" />
        <span className="ml-[7px]">(28日)</span>
        <button className="ml-auto text-[#999999]" aria-label="关闭"><X size={20} strokeWidth={1} /></button>
      </header>
      <table className="mt-[2px] w-full table-fixed border-collapse leading-none">
        <colgroup>
          <col className="w-[80px]" /><col className="w-[90px]" /><col className="w-[88px]" /><col />
        </colgroup>
        <tbody>
          {INTERVAL.map(([a, b, bc, c, d, dc], i) => (
            <tr key={a} className="h-[20px]">
              <td className="pl-[3px] text-[13px] whitespace-pre text-[#5a5a5a]">
                <span className="flex items-center gap-1">{a}{i === 1 && <HelpMark />}</span>
              </td>
              <td className={`text-right text-[14px] ${bc}`}>{b}</td>
              <td className="pl-2 text-[13px] whitespace-nowrap text-[#5a5a5a]">
                <span className="flex items-center gap-1">{c}{i === 1 && <HelpMark />}</span>
              </td>
              <td className={`pr-1 text-right text-[14px] ${dc}`}>{d}</td>
            </tr>
          ))}
        </tbody>
      </table>
    </section>
  );
}

const TABS = ["市盈率", "市净率", "陆股通持股占比", "BOLL", "KDJ", "MACD", "RSI", "SAR", "W&R"];

function tabClass(t, i) {
  if (t === "BOLL") return "w-[66px] bg-[#d6d6d6] pl-2 text-left text-[14px] text-black";
  if (t === "MACD") return "w-[76px] border-r border-white pl-[9px] text-left text-[14px]";
  if (i > 3) return "w-[65px] border-r border-white pl-[9px] text-left text-[14px]";
  return "border-r border-white pr-6 pl-[9px]";
}

function ChartColumn() {
  return (
    <main className="flex min-w-0 flex-1 flex-col">
      <InfoRows />
      <div className="relative">
        <MainChart />
        <IntervalWindow />
      </div>
      <div className="flex h-[21px] shrink-0 items-center gap-[5px] pl-px text-[12px] leading-none">
        <button className="h-[18px] w-[17px] bg-[#f0f0f0] text-[#333333]">?</button>
        <span className="-ml-[3px] text-[#333333]">BOLL(20,2)</span>
        <span className="text-black">BOLL: 3.03</span>
        <span className="text-[#d4002c]">UPPER: 3.50</span>
        <span className="text-[#0030f0]">LOWER: 2.56</span>
      </div>
      <BollChart />
      <div className="flex h-[21px] shrink-0 items-center gap-[6px] pl-[2px] text-[12px] leading-none">
        <span className="text-black">AMO: 5.04亿</span>
        <span className="text-black">MA(5): 4.14亿</span>
        <span className="text-[#d4002c]">MA(10): 3.27亿</span>
        <span className="text-[#0030f0]">MA(20): 3.43亿</span>
      </div>
      <AmoChart />
      <div className="flex flex-1 items-stretch bg-[#f2f2f2] text-[13px] leading-none text-[#333333]">
        {TABS.map((t, i) => (
          <button key={t} className={tabClass(t, i)}>{t}</button>
        ))}
        <button className="flex w-[26px] items-center justify-center border-r border-white" aria-label="添加指标">
          <svg width="17" height="17" viewBox="0 0 17 17" fill="none" stroke="#555555">
            <path d="M0.5 0.5 h16 v16 h-16 z M8.5 3 v11 M3 8.5 h11" />
          </svg>
        </button>
      </div>
    </main>
  );
}

/* ------------------------------------------------------------ chip panel */

const STATS = [
  ["日期", "2026年08月27日"], ["获利比率", "93.76%"], ["平均成本", "3.14"], ["90%成本", "2.65-3.95"],
  ["集中度", "19.70%"], ["70%成本", "2.81-3.62"], ["集中度", "12.60%"],
];
const PEAKS = [["筹码峰区域峰值", "2.99"], ["筹码峰区域平均成本", "2.96"]];

function StatTable({ rows }) {
  return (
    <table className="w-full text-[13px] leading-none text-[#333333]">
      <tbody>
        {rows.map(([l, v], i) => (
          <tr key={i} className="h-[22px]">
            <td className="pl-[10px] whitespace-nowrap">{l}</td>
            <td className={`pr-[10px] text-right whitespace-nowrap ${i === 0 ? "" : "text-[14px]"}`}>{v}</td>
          </tr>
        ))}
      </tbody>
    </table>
  );
}

function ChipPanel() {
  return (
    <aside className="flex min-h-0 w-[189px] shrink-0 flex-col overflow-hidden border-l border-[#ededed]">
      <div className="flex h-[20px] shrink-0 items-center border-y border-[#efefef] text-[13px] leading-none text-[#333333]">
        <span className="flex-1 pl-[14px] text-center">普通筹码</span>
        <button className="pr-1 text-[#b4b4b4]" aria-label="关闭"><X size={12} strokeWidth={1.2} /></button>
      </div>
      <ChipChart />
      <div className="flex h-[26px] shrink-0 items-stretch border-y border-[#efefef] text-[13px] leading-none text-[#333333]">
        <button className="w-[75px] bg-[#d6d6d6] text-black">筹码统计</button>
        <button className="w-[75px]">筹码龄分析</button>
        <button className="w-[36px]">设置</button>
      </div>
      <div className="shrink-0 border-b border-[#efefef] pt-[6px] pb-1"><StatTable rows={STATS} /></div>
      <div className="min-h-0 flex-1 overflow-hidden pt-[5px]"><StatTable rows={PEAKS} /></div>
    </aside>
  );
}

/* ----------------------------------------------------------- quote panel */

function QuoteHeader() {
  return (
    <header className="flex h-[70px] shrink-0 justify-between border-b-2 border-[#dcdcdc] leading-none">
      <div className="flex flex-col pl-[5px]">
        <div className="flex h-[53px] items-center gap-[10px] pt-[8px] pl-[2px] font-bold text-[#c80000]">
          <span className="text-[35px]">3.82</span>
          <span className="text-[17px]">+0.35</span>
          <span className="text-[17px]">+10.09%</span>
        </div>
        <div className="flex h-[16px] items-center gap-[9px] text-[12px] text-[#8c8c8c]">
          <span>SSE</span><span>CNY</span><span>14:38:33</span><span>交易中</span>
          <a href="#l2" className="text-[#f58410]">查看L2全景</a>
        </div>
      </div>
      <div className="flex flex-col items-end pr-1">
        <div className="flex gap-1 pt-[5px]">
          <div className="flex flex-col items-end gap-[2px]">
            <span className="h-[20px] text-[18px] leading-[20px] font-bold text-[#333333]">青山纸业</span>
            <span className="h-[22px] text-[21px] leading-[22px] text-[#3080d8]">600103</span>
          </div>
          <button className="flex h-[40px] w-[40px] flex-col items-center justify-center bg-[#b8181c] text-[14px] leading-[18px] text-white">
            <span>立即</span><span>交易</span>
          </button>
        </div>
        <div className="mt-[5px] flex items-center gap-[5px] text-[13px] text-[#8c8c8c]">
          通
          <button className="flex h-[12px] w-[13px] items-center justify-center bg-[#f2f2f2] text-[#1898b4]" aria-label="编辑"><Pencil size={9} fill="currentColor" /></button>
          <button className="flex h-[12px] w-[13px] items-center justify-center bg-[#d4d4d4] text-[#1898b4]" aria-label="提醒"><Bell size={10} fill="currentColor" /></button>
          <button className="flex h-[12px] w-[13px] items-center justify-center bg-[#f2f2f2] text-[#1898b4]" aria-label="添加"><Plus size={11} /></button>
        </div>
      </div>
    </header>
  );
}

function QuadTable({ rows }) {
  return (
    <table className="w-full table-fixed border-collapse leading-none whitespace-nowrap">
      <colgroup>
        <col className="w-[62px]" /><col className="w-[72px]" /><col className="w-[80px]" /><col />
      </colgroup>
      <tbody>
        {rows.map(([a, b, bc, c, d, dc], i) => (
          <tr key={i} className="h-[20px]">
            <td className="pl-[6px] text-[13px] text-[#5a5a5a]">{a}</td>
            <td className={`text-right text-[14px] ${bc}`}>{b}</td>
            <td className="pl-[6px] text-[13px] text-[#5a5a5a]">{c}</td>
            <td className={`pr-[6px] text-right text-[14px] ${dc}`}>{d}</td>
          </tr>
        ))}
      </tbody>
    </table>
  );
}

const Sup = ({ children }) => <sup className="top-[-5px] ml-px text-[10px] leading-none">{children}</sup>;
const Yen = () => (
  <span className="ml-[2px] inline-flex h-[11px] w-[11px] items-center justify-center rounded-full border border-dotted border-[#8c8c8c] align-middle text-[8px]">¥</span>
);

const TRADE = [
  ["总量", "133.94万", K, "换手", "6.05%", K], ["现手", "1", K, "量比", "1.33", K],
  ["外盘", "47.86万", R, "内盘", "86.08万", G], ["总额", "5.04亿", K, "振幅", "6.05%", K],
  ["均价", "3.76", R, "开盘", "3.71", R], ["最高", "3.82", R, "最低", "3.61", R],
  ["涨停", "3.82", R, "跌停", "3.12", G], ["盘后量", "0", K, "盘后额", "0", K],
];
const VALUE = [
  [<>EPS<Sup>TTM</Sup></>, "0.02", K, "自由流通", "16.30亿", K],
  [<>EPS<Sup>2026E</Sup></>, "-", K, "流通股本", "22.12亿", K],
  [<>PE<Sup>TTM</Sup></>, "220", K, "总股本", "22.41亿", K],
  [<>PE<Sup>2026E</Sup></>, "-", K, "流通值", "85亿", K],
  [<>PB<Sup>LF</Sup></>, "2.15", K, <>总市值<Sup>1</Sup><Yen /></>, "86亿", K],
  [<>股息率<Sup>TTM</Sup></>, "0.23", K, <>总市值<Sup>2</Sup><Yen /></>, "86亿", K],
];
const TICKS = [
  ["14:36:51", "2万"], ["14:37:00", "3056"], ["14:37:06", "764"], ["14:37:09", "3820"], ["14:37:12", "3820"],
  ["14:37:15", "382"], ["14:37:21", "3820"], ["14:37:27", "1万"], ["14:37:36", "7640"], ["14:37:39", "2292"],
  ["14:37:45", "7640"], ["14:37:51", "3820"], ["14:37:57", "382"], ["14:38:03", "6494"], ["14:38:18", "2万"], ["14:38:24", "382"],
];

function DepthTable({ rows, color }) {
  return (
    <table className="w-full table-fixed border-collapse leading-none">
      <colgroup><col className="w-[62px]" /><col className="w-[102px]" /><col /></colgroup>
      <tbody>
        {rows.map(([l, p, v]) => (
          <tr key={l} className="h-[19px]">
            <td className="pl-[6px] text-[13px] text-[#5a5a5a]">{l}</td>
            <td className={`text-right text-[14px] ${color}`}>{p}</td>
            <td className={`pr-[7px] text-right text-[14px] ${K}`}>{v}</td>
          </tr>
        ))}
      </tbody>
    </table>
  );
}

function QuoteColumn() {
  return (
    <section className="flex w-[277px] shrink-0 flex-col border-r-2 border-[#dcdcdc]">
      <div className="border-b border-[#dcdcdc]"><QuadTable rows={[["委比", "100.00%", R, "委差", "914913", R]]} /></div>
      <div className="relative border-b border-[#dcdcdc] pb-px">
        <DepthTable color={K} rows={[["卖五", "-", "-"], ["卖四", "-", "-"], ["卖三", "-", "-"], ["卖二", "-", "-"], ["卖一", "-", "-"]]} />
        <div className="absolute top-0 left-[48px] h-[63px] w-[201px] bg-[#585c62]/85 px-[10px] text-[13px] leading-[21px] text-[#dedede]">
          <div className="flex justify-between"><span>涨停封单额</span><span>3.44亿</span></div>
          <div className="flex justify-between"><span>封单占成交</span><span>68.30%</span></div>
          <a href="#lv2" className="block text-center text-[#f58410]">升级LV2解锁全景盘口</a>
        </div>
      </div>
      <div className="border-b border-[#dcdcdc] pb-[6px]">
        <DepthTable color={R} rows={[["买一", "3.82", "3.43亿"], ["买二", "3.81", "297万"], ["买三", "3.80", "221万"], ["买四", "3.79", "49万"], ["买五", "3.78", "55万"]]} />
      </div>
      <div className="h-[160px] shrink-0 border-b border-[#dcdcdc]"><QuadTable rows={TRADE} /></div>
      <div className="h-[120px] shrink-0 border-b border-[#dcdcdc]"><QuadTable rows={VALUE} /></div>
      <table className="mt-[2px] w-full table-fixed border-collapse text-[14px] leading-none">
        <colgroup><col className="w-[80px]" /><col className="w-[86px]" /><col /></colgroup>
        <tbody>
          {TICKS.map(([t, v], i) => (
            <tr key={t} className={i === 0 || i === 12 ? "h-[20px] border-b border-[#ededed]" : "h-[20px]"}>
              <td className="pl-[5px] text-[#5a5a5a]">{t}</td>
              <td className={`text-right ${R}`}>3.82</td>
              <td className={`pr-[5px] text-right ${G}`}>{v}</td>
            </tr>
          ))}
        </tbody>
      </table>
    </section>
  );
}

/* ------------------------------------------------------ company overview */

const RATIOS = [
  ["EPS", "0.04", "0.02", "0.02"], ["BPS", "1.74", "1.77", "1.78"], ["ROE", "2.17%", "1.39%", "1.01%"],
  ["ROA", "1.49%", "1.18%", "0.84%"], ["毛利率", "16.62%", "18.74%", "19.50%"],
  ["净利率", "3.60%", "3.03%", "4.19%"], ["负债率", "32.41%", "28.30%", "29.87%"],
];
const FORECAST = [
  ["收入", "26.7亿", "26.0亿", "24.2亿"], ["同比", "-8.49%", "-2.71%", "-6.98%"], ["净利润", "1.22亿", "8475万", "5468万"],
  ["同比", "-41.3%", "-30.5%", "-35.5%"], ["PE", "45.2", "68.1", "171.7"],
];
const REPORT = [
  ["报告期", "2026年中报", K], ["报告类型", "报告期", K], ["净利润", "4023万", R],
  ["净利润同比", "-28.26%", G], ["净利润对应PE", "106.4", K],
];
const DIVIDEND = [["2026-05-25", "每股派息0.01"], ["2025-05-26", "每股派息0.01"], ["2024-06-05", "每股派息0.02"]];
const TOPICS = [
  ["所属行业", ["纸制品"]], ["所属产业链", ["纸", "纸浆", "中成药", "回收利用"]], ["主营业务", ["纸", "浆及副产品", "浆板", "浆粕"]],
];

function YearTable({ corner, years, rows, headColor }) {
  return (
    <table className="w-full table-fixed border-collapse leading-none">
      <colgroup><col className="w-[56px]" /><col className="w-[68px]" /><col className="w-[75px]" /><col /></colgroup>
      <thead>
        <tr className="h-[20px]">
          <th className="pl-[6px] text-left text-[13px] font-normal text-[#5a5a5a]">{corner}</th>
          {years.map((y) => <th key={y} className={`text-right text-[14px] font-bold last:pr-[6px] ${headColor}`}>{y}</th>)}
        </tr>
      </thead>
      <tbody>
        {rows.map(([l, ...v], i) => (
          <tr key={i} className="h-[20px]">
            <td className="pl-[6px] text-[13px] text-[#5a5a5a]">{l}</td>
            {v.map((t, j) => (
              <td key={j} className={`text-right text-[14px] last:pr-[6px] ${t.startsWith("-") ? G : K}`}>{t}</td>
            ))}
          </tr>
        ))}
      </tbody>
    </table>
  );
}

function PairRow({ l, v, c, bold }) {
  return (
    <div className="flex h-[20px] items-center justify-between pr-[6px] pl-[7px] text-[13px] leading-none">
      <span className={bold ? "font-bold text-[#333333]" : "text-[#5a5a5a]"}>{l}</span>
      <span className={c}>{v}</span>
    </div>
  );
}

function CompanyColumn() {
  return (
    <section className="flex min-w-0 flex-1 flex-col pl-[3px]">
      <div className="flex h-[20px] shrink-0 items-center border-b border-[#dcdcdc] pt-[2px] pr-[9px] pl-[2px] text-[13px] leading-none text-[#5a5a5a]">
        <span className="w-[120px]">Wind&nbsp; ESG评级</span>
        <b className="text-[15px] text-black">A</b>
        <a href="#esg" className="ml-auto text-[#4ab0cc]">详情</a>
      </div>
      <div className="h-[80px] shrink-0 border-b border-[#dcdcdc] pt-px">
        <table className="w-full table-fixed border-collapse leading-none">
          <colgroup><col className="w-[56px]" /><col className="w-[78px]" /><col className="w-[70px]" /><col /></colgroup>
          <tbody>
            {[["今年", "-8.61%", G, "120日", "3.21%", R], ["5日", "33.10%", R, "250日", "67.94%", R],
              ["20日", "42.01%", R, "52周高", "5.71", K], ["60日", "-6.14%", G, "52周低", "2.26", K]].map((r) => (
              <tr key={r[0]} className="h-[20px]">
                <td className="pl-[6px] text-[13px] text-[#5a5a5a]">{r[0]}</td>
                <td className={`text-right text-[14px] ${r[2]}`}>{r[1]}</td>
                <td className="pl-[7px] text-[13px] text-[#5a5a5a]">{r[3]}</td>
                <td className={`pr-[6px] text-right text-[14px] ${r[5]}`}>{r[4]}</td>
              </tr>
            ))}
          </tbody>
        </table>
      </div>
      <div className="h-[160px] shrink-0 border-b border-[#dcdcdc]">
        <YearTable corner="" years={["2024", "2025", "2026H1"]} rows={RATIOS} headColor="text-[#333333]" />
      </div>
      <div className="flex h-[21px] shrink-0 items-stretch text-[13px] leading-none text-[#333333]">
        <button className="w-[53px] bg-[#d6d6d6] text-black">净利润</button>
        <button className="w-[78px]">营业总收入</button>
        <button className="ml-auto pr-2 font-bold" aria-label="更多">•••</button>
      </div>
      <ProfitChart />
      <div className="h-[120px] shrink-0 border-b border-[#dcdcdc]">
        <YearTable corner="(CNY)" years={["2023", "2024", "2025"]} rows={FORECAST} headColor="text-[#1878b4]" />
      </div>
      <div className="h-[120px] shrink-0 border-b border-[#dcdcdc]">
        <PairRow l="财报披露" v="2026-08-25" c={`text-[14px] ${K}`} bold />
        {REPORT.map(([l, v, c]) => <PairRow key={l} l={l} v={v} c={`${/^[-\d.万]+%?$/.test(v) ? "text-[14px]" : ""} ${c}`} />)}
      </div>
      <div className="h-[80px] shrink-0 border-b border-[#dcdcdc]">
        <PairRow l="分红" v="•••" c="font-bold text-[#333333] pr-[2px]" bold />
        {DIVIDEND.map(([l, v]) => <PairRow key={l} l={<span className="text-[14px]">{l}</span>} v={v} c={K} />)}
      </div>
      <dl className="shrink-0 pt-px text-[13px] leading-[19px] text-[#333333]">
        {TOPICS.map(([l, items]) => (
          <div key={l} className="flex pl-[7px]">
            <dt className="w-[80px] font-bold">{l}</dt>
            <dd className="flex gap-[10px]">{items.map((t) => <span key={t}>{t}</span>)}</dd>
          </div>
        ))}
      </dl>
      <div className="mt-auto flex h-[26px] shrink-0 items-stretch gap-[2px] bg-[#f2f2f2] text-[13px] leading-none text-[#333333]">
        <button className="w-[43px] bg-[#d6d6d6] text-black">基本</button>
        <button className="w-[43px]">资金</button>
        <button className="w-[43px] bg-[#e2e2e2]">快讯</button>
      </div>
    </section>
  );
}

export default function App() {
  return (
    <div className="flex h-screen flex-col overflow-hidden border-x border-[#2c3038] bg-white font-['Noto_Sans','Noto_Sans_CJK_SC',sans-serif]">
      <div className="h-[2px] shrink-0 bg-[#5a5a66]" />
      <div className="flex min-h-0 flex-1">
        <Sidebar />
        <div className="flex min-h-0 min-w-0 flex-1 flex-col">
          <Toolbar />
          <div className="flex min-h-0 flex-1">
            <ChartColumn />
            <ChipPanel />
          </div>
        </div>
        <div className="flex w-[12px] shrink-0 flex-col justify-center border-l-2 border-[#dcdcdc] bg-[#fafafa]">
          <button className="flex h-[107px] items-center justify-center rounded-l-[8px] bg-[#ebebeb] text-[#666666]" aria-label="收起">
            <ChevronsRight size={12} strokeWidth={2} />
          </button>
        </div>
        <div className="flex min-h-0 w-[560px] shrink-0 flex-col">
          <QuoteHeader />
          <div className="flex min-h-0 flex-1">
            <QuoteColumn />
            <CompanyColumn />
          </div>
        </div>
      </div>
      <div className="h-[3px] shrink-0 bg-[#2c3038]" />
    </div>
  );
}
